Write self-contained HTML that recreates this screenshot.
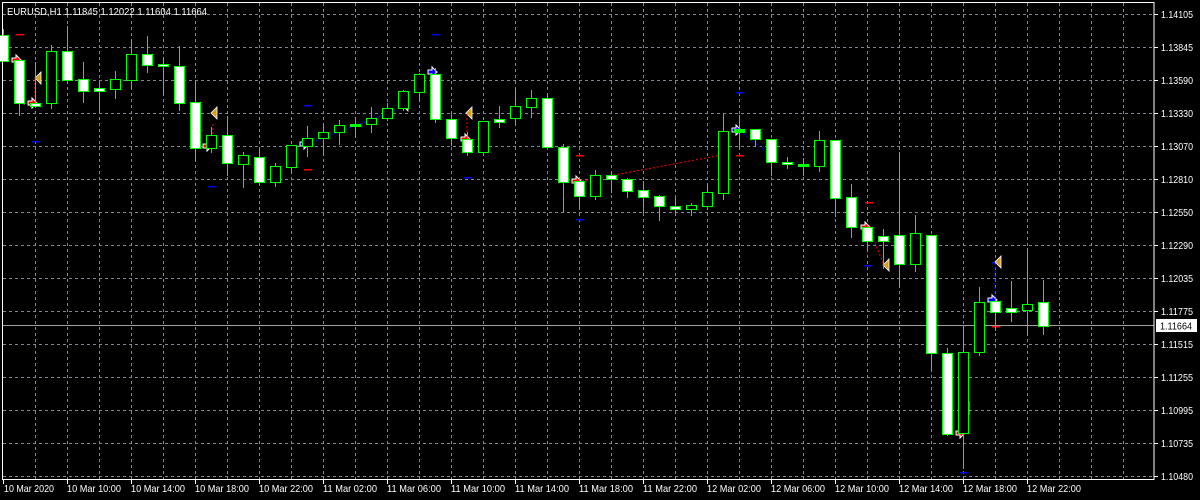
<!DOCTYPE html>
<html><head><meta charset="utf-8"><style>
html,body{margin:0;padding:0;background:#000;width:1200px;height:500px;overflow:hidden}
svg{display:block}
text{font-family:"Liberation Sans",sans-serif;font-size:10.5px;fill:#fff}
</style></head><body>
<svg id="s" width="1200" height="500" viewBox="0 0 1200 500" shape-rendering="crispEdges">
<rect width="1200" height="500" fill="#000"/>
<g id="grid" stroke="#7a8899" stroke-dasharray="3,3" stroke-width="1"></g>
<line x1="2" y1="325.5" x2="1154" y2="325.5" stroke="#a0a0a0"/>
<g id="sig"></g>
<g id="cnd"></g>
<rect x="2.5" y="2.5" width="1151.5" height="477" fill="none" stroke="#fff"/>
<g id="ticks" stroke="#fff"></g>
<text x="7" y="15" textLength="200" lengthAdjust="spacingAndGlyphs">EURUSD,H1  1.11845 1.12022 1.11604 1.11664</text>
<g>
<text x="1161" y="18" textLength="32" lengthAdjust="spacingAndGlyphs">1.14105</text>
<text x="1161" y="51" textLength="32" lengthAdjust="spacingAndGlyphs">1.13845</text>
<text x="1161" y="84" textLength="32" lengthAdjust="spacingAndGlyphs">1.13590</text>
<text x="1161" y="117" textLength="32" lengthAdjust="spacingAndGlyphs">1.13330</text>
<text x="1161" y="150" textLength="32" lengthAdjust="spacingAndGlyphs">1.13070</text>
<text x="1161" y="183" textLength="32" lengthAdjust="spacingAndGlyphs">1.12810</text>
<text x="1161" y="216" textLength="32" lengthAdjust="spacingAndGlyphs">1.12550</text>
<text x="1161" y="249" textLength="32" lengthAdjust="spacingAndGlyphs">1.12290</text>
<text x="1161" y="282" textLength="32" lengthAdjust="spacingAndGlyphs">1.12035</text>
<text x="1161" y="315" textLength="32" lengthAdjust="spacingAndGlyphs">1.11775</text>
<text x="1161" y="348" textLength="32" lengthAdjust="spacingAndGlyphs">1.11515</text>
<text x="1161" y="381" textLength="32" lengthAdjust="spacingAndGlyphs">1.11255</text>
<text x="1161" y="414" textLength="32" lengthAdjust="spacingAndGlyphs">1.10995</text>
<text x="1161" y="447" textLength="32" lengthAdjust="spacingAndGlyphs">1.10735</text>
<text x="1161" y="480" textLength="32" lengthAdjust="spacingAndGlyphs">1.10480</text>
</g>
<rect x="1156" y="319" width="41" height="13" fill="#fff"/>
<text x="1160" y="329.5" textLength="32" lengthAdjust="spacingAndGlyphs" style="fill:#000">1.11664</text>
<g>
<text x="4" y="492" textLength="50" lengthAdjust="spacingAndGlyphs">10 Mar 2020</text>
<text x="67" y="492" textLength="54" lengthAdjust="spacingAndGlyphs">10 Mar 10:00</text>
<text x="131" y="492" textLength="54" lengthAdjust="spacingAndGlyphs">10 Mar 14:00</text>
<text x="195" y="492" textLength="54" lengthAdjust="spacingAndGlyphs">10 Mar 18:00</text>
<text x="259" y="492" textLength="54" lengthAdjust="spacingAndGlyphs">10 Mar 22:00</text>
<text x="323" y="492" textLength="54" lengthAdjust="spacingAndGlyphs">11 Mar 02:00</text>
<text x="387" y="492" textLength="54" lengthAdjust="spacingAndGlyphs">11 Mar 06:00</text>
<text x="451" y="492" textLength="54" lengthAdjust="spacingAndGlyphs">11 Mar 10:00</text>
<text x="515" y="492" textLength="54" lengthAdjust="spacingAndGlyphs">11 Mar 14:00</text>
<text x="579" y="492" textLength="54" lengthAdjust="spacingAndGlyphs">11 Mar 18:00</text>
<text x="643" y="492" textLength="54" lengthAdjust="spacingAndGlyphs">11 Mar 22:00</text>
<text x="707" y="492" textLength="54" lengthAdjust="spacingAndGlyphs">12 Mar 02:00</text>
<text x="771" y="492" textLength="54" lengthAdjust="spacingAndGlyphs">12 Mar 06:00</text>
<text x="835" y="492" textLength="54" lengthAdjust="spacingAndGlyphs">12 Mar 10:00</text>
<text x="899" y="492" textLength="54" lengthAdjust="spacingAndGlyphs">12 Mar 14:00</text>
<text x="963" y="492" textLength="54" lengthAdjust="spacingAndGlyphs">12 Mar 18:00</text>
<text x="1027" y="492" textLength="54" lengthAdjust="spacingAndGlyphs">12 Mar 22:00</text>
</g>
</svg>
<script>
var NS="http://www.w3.org/2000/svg";
function el(p,t,a){var e=document.createElementNS(NS,t);for(var k in a)e.setAttribute(k,a[k]);p.appendChild(e);return e;}
var g=document.getElementById('grid');
for(var k=0;k<15;k++){var y=14.5+33*k;el(g,'line',{x1:3,y1:y,x2:1153,y2:y});}
for(var k=1;k<36;k++){var x=3.5+32*k;el(g,'line',{x1:x,y1:3,x2:x,y2:479});}
var t=document.getElementById('ticks');
for(var k=0;k<15;k++){var y=14.5+33*k;el(t,'line',{x1:1154,y1:y,x2:1158,y2:y});}
for(var k=0;k<17;k++){var x=3.5+64*k;el(t,'line',{x1:x,y1:480,x2:x,y2:484});}
var C=[
[29,61,35,61,'w'],[60,115,60,103,'w'],[62,107,103,106,'w'],[45,108,51,103,'b'],[26,82,51,80,'w'],
[62,102,79,91,'w'],[82,112,88,91,'w'],[71,98,79,89,'b'],[39,88,54,80,'b'],[36,72,54,65,'w'],
[57,93,64,66,'w'],[46,110,66,103,'w'],[81,160,102,148,'w'],[127,152,135,148,'b'],[116,175,135,163,'w'],
[152,187,155,164,'b'],[147,184,157,182,'w'],[163,186,166,182,'b'],[145,173,145,167,'b'],[126,156,138,146,'b'],
[123,155,132,138,'b'],[120,144,125,132,'b'],[117,137,124,126,'g'],[107,132,118,124,'b'],[103,120,108,118,'b'],
[90,110,91,108,'b'],[73,101,74,92,'b'],[68,122,74,119,'w'],[113,145,119,138,'w'],[132,155,139,152,'w'],
[121,152,121,152,'b'],[106,127,119,122,'w'],[90,124,106,118,'b'],[90,117,98,107,'b'],[93,147,98,147,'w'],
[144,211,147,182,'w'],[178,208,181,196,'w'],[170,199,175,196,'b'],[171,192,175,179,'w'],[178,197,179,191,'w'],
[181,212,190,197,'w'],[195,220,196,206,'w'],[198,215,206,209,'w'],[203,215,205,209,'b'],[186,208,192,206,'b'],
[113,199,131,193,'b'],[115,148,129,132,'g'],[129,146,129,139,'w'],[139,175,139,162,'w'],[157,168,162,164,'w'],
[158,175,164,166,'g'],[131,171,140,166,'b'],[140,216,140,198,'w'],[184,237,197,227,'w'],[225,250,227,241,'w'],
[229,268,236,241,'w'],[152,287,235,264,'w'],[215,271,233,264,'b'],[235,370,235,353,'w'],[348,435,353,434,'w'],
[326,468,352,433,'b'],[287,355,302,352,'b'],[297,330,301,312,'w'],[281,321,308,312,'w'],[248,335,304,310,'b'],
[280,334,302,326,'w']];
var c=document.getElementById('cnd');
C.forEach(function(d,i){var x=3+16*i;
el(c,'line',{x1:x+0.5,y1:d[0],x2:x+0.5,y2:d[1]+1,stroke:'#00ff00'});
var fill=d[4]=='w'?'#fff':(d[4]=='b'?'#000':'#00ff00');
var h=Math.max(d[3]-d[2],1);
el(c,'rect',{x:x-4.5,y:d[2]+0.5,width:10,height:h,fill:fill,stroke:'#00ff00'});
});
var s=document.getElementById('sig');
function dash(x,y,col){el(s,'line',{x1:x,y1:y+0.5,x2:x+8,y2:y+0.5,stroke:col,'stroke-width':1.5});}
function dl(x1,y1,x2,y2,col){el(s,'line',{x1:x1,y1:y1,x2:x2,y2:y2,stroke:col,'stroke-dasharray':'2,2','shape-rendering':'auto'});}
function arr(x,y,col){el(s,'polygon',{points:(x-4)+','+(y-2)+' '+x+','+(y-2)+' '+x+','+(y-5)+' '+(x+5)+','+y+' '+x+','+(y+5)+' '+x+','+(y+2)+' '+(x-4)+','+(y+2),fill:col,stroke:'#fff','stroke-width':1,'shape-rendering':'auto'});}
function tri(x,y){el(s,'polygon',{points:(x+3)+','+(y-6)+' '+(x+3)+','+(y+6)+' '+(x-3)+','+y,fill:'#d4a017',stroke:'#fff','stroke-width':0.8,'shape-rendering':'auto'});}
dash(16,34,'#f00');
dl(19,62,19,98,'#f00');arr(16,60,'#f00');tri(21,98);dash(16,98,'#00f');
dl(35,79,35,102,'#f00');tri(38,78);arr(32,103,'#f00');dash(32,141,'#00f');
dl(213,124,213,146,'#f00');tri(214,113);arr(207,146,'#f00');dash(208,186,'#00f');
dash(304,105,'#00f');dash(304,169,'#f00');dl(308,144,400,108,'#00f');arr(304,144,'#00f');
tri(405,105);
dash(432,34,'#00f');dl(436,74,436,98,'#00f');arr(432,72,'#00f');tri(437,98);
tri(469,113);dl(467,114,467,138,'#f00');arr(465,139,'#f00');dash(464,177,'#00f');
dash(576,155,'#f00');dash(576,219,'#00f');dl(582,181,722,155,'#f00');arr(576,181,'#f00');tri(725,155);
dash(736,92,'#00f');dash(736,155,'#f00');dl(740,131,770,155,'#00f');arr(736,130,'#00f');tri(773,155);
dash(865,202,'#f00');dl(869,228,884,265,'#f00');arr(865,227,'#f00');tri(886,265);dash(864,265,'#00f');
dash(992,262,'#00f');dl(995,263,995,298,'#00f');tri(998,262);arr(992,300,'#00f');dash(992,326,'#f00');
dl(963,409,963,432,'#f00');tri(966,408);arr(960,433,'#f00');dash(960,472,'#00f');
</script>
</body></html>
